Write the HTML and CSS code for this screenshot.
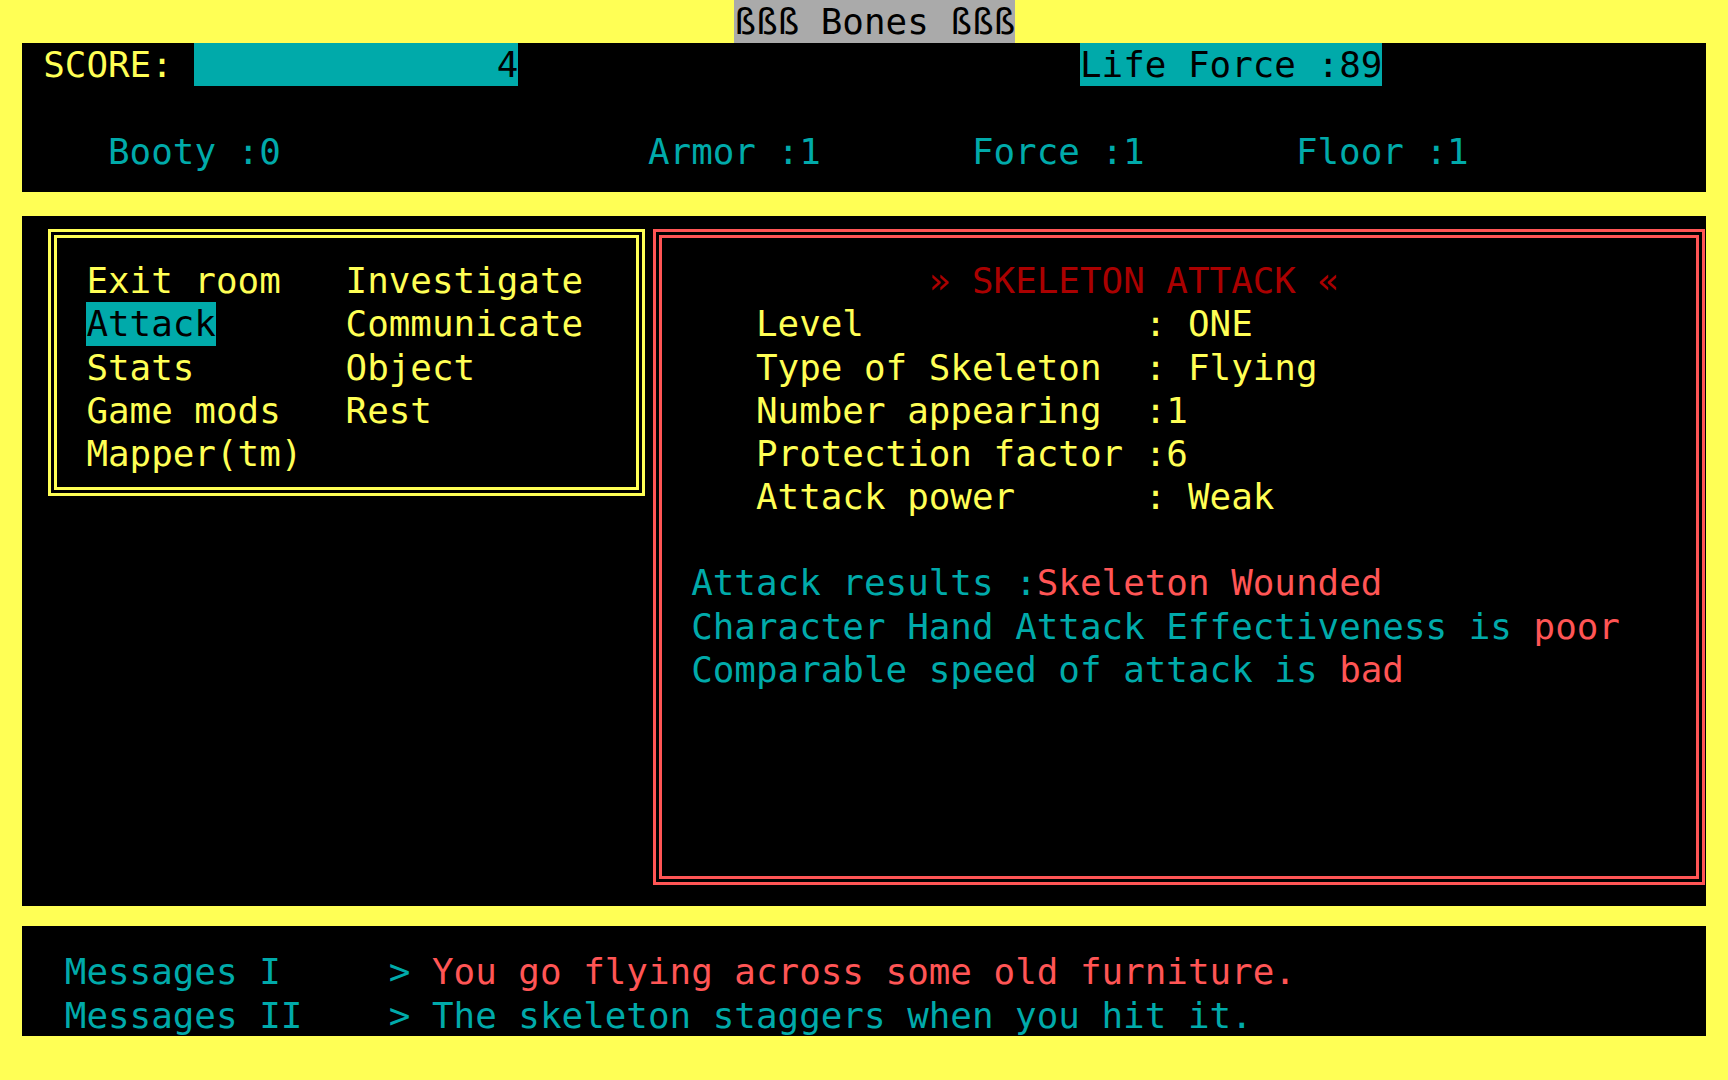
FILE: index.html
```html
<!DOCTYPE html>
<html>
<head>
    <title>Bones</title>
    <link rel="stylesheet" href="styles.css">
</head>
<body>
<div class="line title"><span class="tag">ßßß Bones ßßß</span></div>

<div class="status">
    <div class="line"><span class="yellow">SCORE: </span><span class="cell">              4</span>                          <span class="cell">Life Force :89</span></div>
    <div class="line"></div>
    <div class="line cyan">   Booty :0                 Armor :1       Force :1       Floor :1</div>
</div>

<div class="main">
    <div class="menu">
        <div class="line">Exit room   Investigate</div>
        <div class="line"><span class="cell">Attack</span>      Communicate</div>
        <div class="line">Stats       Object</div>
        <div class="line">Game mods   Rest</div>
        <div class="line">Mapper(tm)</div>
    </div>

    <div class="report">
        <div class="line dark-red">           » SKELETON ATTACK «</div>
        <div class="line">   Level             : ONE</div>
        <div class="line">   Type of Skeleton  : Flying</div>
        <div class="line">   Number appearing  :1</div>
        <div class="line">   Protection factor :6</div>
        <div class="line">   Attack power      : Weak</div>
        <div class="line"></div>
        <div class="line cyan">Attack results :<span class="red">Skeleton Wounded</span></div>
        <div class="line cyan">Character Hand Attack Effectiveness is <span class="red">poor</span></div>
        <div class="line cyan">Comparable speed of attack is <span class="red">bad</span></div>
    </div>
</div>

<div class="messages">
    <div class="line">Messages I     &gt; <span class="red">You go flying across some old furniture.</span></div>
    <div class="line">Messages II    &gt; The skeleton staggers when you hit it.</div>
</div>
</body>
</html>
```

FILE: styles.css
```css
/* 80x25 text screen: one cell is 21.6 x 43.2 px */
body {
    margin: 0;
    background: #ffff55;
    color: #ffff55;
    font-family: "DejaVu Sans Mono", monospace;
    font-size: 35.88px;
    line-height: 43.2px;
    overflow: hidden;
}
.line {
    height: 43.2px;
    white-space: pre;
}
.yellow { color: #ffff55; }
.cyan { color: #00aaaa; }
.red { color: #ff5555; }
.dark-red { color: #aa0000; }

.title {
    padding-left: 34ch;
    color: #000;
}
.tag {
    display: inline-block;
    vertical-align: top;
    height: 43.2px;
    background: #aaaaaa;
}
.cell {
    display: inline-block;
    vertical-align: top;
    height: 43.2px;
    background: #00aaaa;
    color: #000;
}

.status {
    margin: 0 21.6px;
    padding-left: 21.6px;
    height: 148.8px;
    background: #000;
}

.main {
    display: flex;
    align-items: flex-start;
    margin: 24px 21.6px 0;
    height: 690px;
    background: #000;
}
.menu {
    box-sizing: border-box;
    margin: 13px 0 0 26.4px;
    padding: 21.2px 0 0 29.4px;
    width: 597px;
    height: 267px;
    border: 9px double #ffff55;
}
.report {
    box-sizing: border-box;
    margin: 13px 0 0 8px;
    padding: 21.2px 0 0 29.2px;
    width: 1052px;
    height: 656px;
    border: 9px double #ff5555;
}

.messages {
    box-sizing: border-box;
    margin: 20px 21.6px 0;
    padding: 24.4px 0 0 43.2px;
    height: 110px;
    background: #000;
    color: #00aaaa;
}
```
